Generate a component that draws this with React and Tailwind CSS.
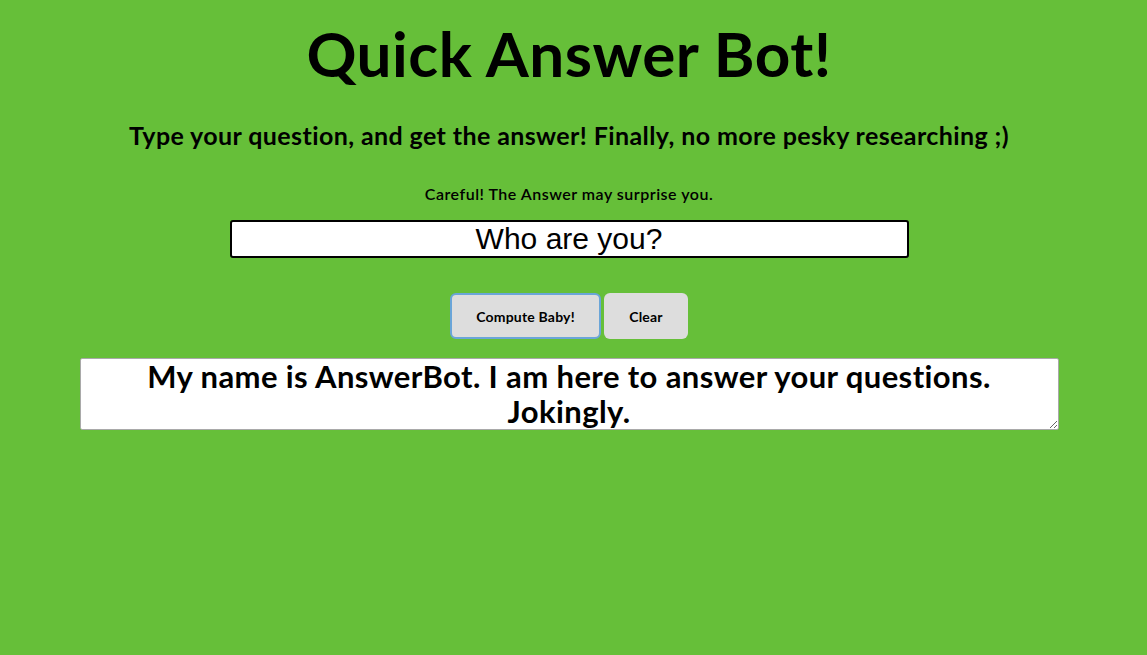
import { useState } from "react";

const App = () => {
  const [question, setQuestion] = useState("Who are you?");
  const [answer, setAnswer] = useState(
    "My name is AnswerBot. I am here to answer your questions. Jokingly."
  );

  return (
    <div className="min-h-[655px] w-full bg-[#66bf39] font-['Lato','Noto_Sans',sans-serif] text-black">
      <div className="flex flex-col items-center pr-[9px]">
        <h1 className="mt-[17px] text-[62px] font-bold leading-[72px] tracking-[0.5px]">
          Quick Answer Bot!
        </h1>
        <h2 className="mt-[31px] text-[25px] font-bold leading-[30px] tracking-[0.4px]">
          Type your question, and get the answer! Finally, no more pesky researching ;)
        </h2>
        <p className="mt-[34px] text-[16px] font-semibold leading-[20px] tracking-[0.5px]">
          Careful! The Answer may surprise you.
        </p>
        <input
          type="text"
          value={question}
          onChange={(e) => setQuestion(e.target.value)}
          className="mt-[16px] h-[38px] w-[679px] rounded-[3px] border-2 border-black bg-white text-center font-['Liberation_Sans',Arial,sans-serif] text-[30px] leading-[34px] outline-none"
        />
        <div className="mt-[35px] flex gap-[3px]">
          <button className="h-[46px] w-[151px] rounded-[6px] border-2 border-[#6aa5d8] bg-[#dddddd] text-[14px] font-bold tracking-[0.2px]">
            Compute Baby!
          </button>
          <button
            onClick={() => setAnswer("")}
            className="h-[46px] w-[84px] rounded-[6px] bg-[#dddddd] text-[14px] font-bold tracking-[0.2px]"
          >
            Clear
          </button>
        </div>
        <textarea
          value={answer}
          onChange={(e) => setAnswer(e.target.value)}
          className="mt-[19px] h-[72px] w-[979px] rounded-[2px] border border-[#a9a9a9] bg-white px-2 text-center text-[31px] font-bold leading-[35px] tracking-[0.4px] outline-none"
        />
      </div>
    </div>
  );
};

export default App;
